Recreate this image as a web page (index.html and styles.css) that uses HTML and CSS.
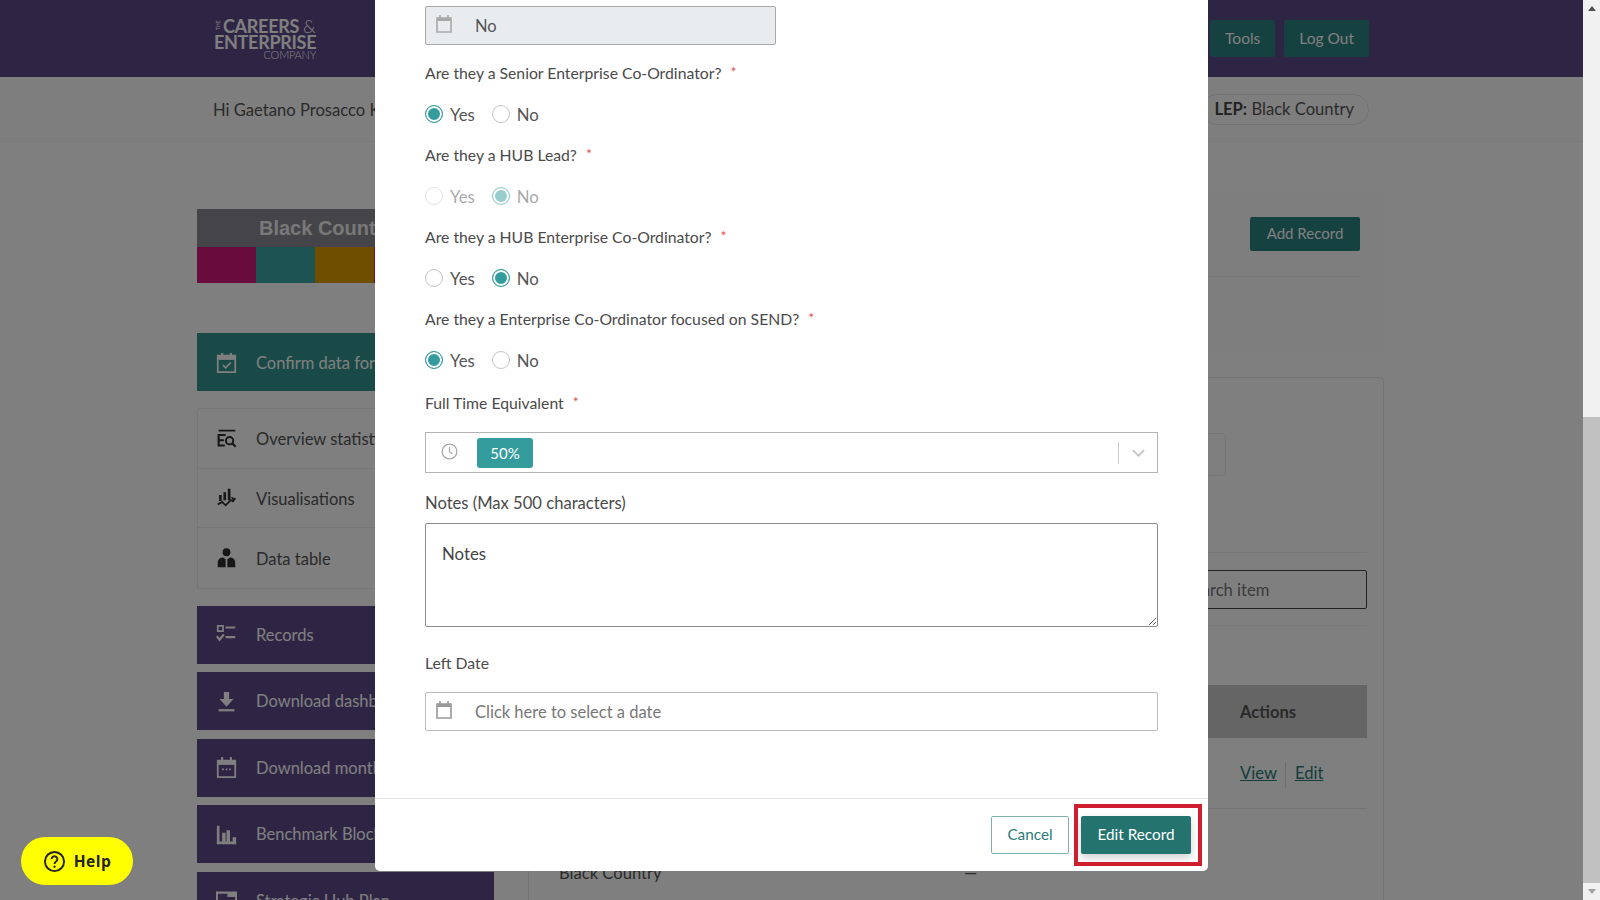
FILE: index.html
```html
<!DOCTYPE html>
<html lang="en">
<head>
    <meta charset="UTF-8">
    <meta name="viewport" content="width=device-width, initial-scale=1.0">
    <title>Edit Record</title>
    <link rel="stylesheet" href="styles.css">
</head>
<body>
<div class="app">
    <div class="page">
        <header class="topbar">
            <div class="logo">
                <div class="logo-line"><span class="logo-the">THE</span><b>CAREERS</b><span class="logo-amp">&amp;</span></div>
                <div class="logo-line"><b>ENTERPRISE</b></div>
                <div class="logo-company">COMPANY</div>
            </div>
            <nav class="topnav">
                <a class="topnav-btn">Tools</a>
                <a class="topnav-btn">Log Out</a>
            </nav>
        </header>

        <div class="subbar">
            <span>Hi Gaetano Prosacco Kuhn</span>
            <span class="lep-pill"><b>LEP:</b> Black Country</span>
        </div>

        <div class="content">
            <aside class="sidebar">
                <div class="banner">
                    <div class="banner-title">Black Country</div>
                    <div class="banner-colours">
                        <span class="c-pink"></span><span class="c-teal"></span><span class="c-gold"></span><span class="c-pink"></span><span class="c-teal"></span>
                    </div>
                </div>

                <a class="side-btn side-teal">
                    <svg class="side-icon" viewBox="0 0 24 24"><path d="M7 1v3M17 1v3" stroke="currentColor" stroke-width="2.4" fill="none"/><path d="M2 4h20v19H2z" stroke="currentColor" stroke-width="2" fill="none"/><path d="M2 4h20v5H2z" fill="currentColor"/><path d="M8 15l3 3 6-6" stroke="currentColor" stroke-width="2" fill="none"/></svg>
                    Confirm data for LEP
                </a>

                <div class="side-group">
                    <a class="side-row">
                        <svg class="side-icon" viewBox="0 0 24 24"><path d="M3 2h19v2H3z" fill="currentColor"/><path d="M11 8H3v12h7M3 14h6" stroke="currentColor" stroke-width="2.4" fill="none"/><circle cx="15.500" cy="14.500" r="4.200" stroke="currentColor" stroke-width="2.200" fill="none"/><path d="M18.500 17.500l4 4" stroke="currentColor" stroke-width="2.400"/></svg>
                        Overview statistics
                    </a>
                    <a class="side-row">
                        <svg class="side-icon" viewBox="0 0 24 24"><path d="M5 9v7M10 6v9M15 2v13" stroke="currentColor" stroke-width="3" fill="none"/><path d="M2 20l5-3 4 4 6-6 3 2" stroke="currentColor" stroke-width="2" fill="none"/><path d="M17 11l6 2-3 4z" fill="currentColor"/></svg>
                        Visualisations
                    </a>
                    <a class="side-row">
                        <svg class="side-icon" viewBox="0 0 24 24"><circle cx="12" cy="6" r="4.500" fill="currentColor"/><path d="M2 23v-5c0-4 3-6 6-6l3 2v9zM22 23v-5c0-4-3-6-6-6l-3 2v9z" fill="currentColor"/></svg>
                        Data table
                    </a>
                </div>

                <div class="side-stack">
                    <a class="side-btn side-purple">
                        <svg class="side-icon" viewBox="0 0 24 24"><path d="M2 2h6v6H2z" fill="none" stroke="currentColor" stroke-width="2"/><path d="M11 4h11M11 15h11" stroke="currentColor" stroke-width="2.400"/><path d="M1 14l3 4 5-6" fill="none" stroke="currentColor" stroke-width="2.400"/></svg>
                        Records
                    </a>
                    <a class="side-btn side-purple">
                        <svg class="side-icon" viewBox="0 0 24 24"><path d="M9 1h6v8h5l-8 9-8-9h5z" fill="currentColor"/><path d="M3 22h18" stroke="currentColor" stroke-width="2.600"/></svg>
                        Download dashboard
                    </a>
                    <a class="side-btn side-purple">
                        <svg class="side-icon" viewBox="0 0 24 24"><path d="M7 0v4M17 0v4" stroke="currentColor" stroke-width="2.400"/><path d="M2 4h20v19H2z" stroke="currentColor" stroke-width="2" fill="none"/><path d="M2 4h20v5H2z" fill="currentColor"/><path d="M7 13h2v2H7zM11 13h2v2h-2zM15 13h2v2h-2z" fill="currentColor"/></svg>
                        Download monthly report
                    </a>
                    <a class="side-btn side-purple">
                        <svg class="side-icon" viewBox="0 0 24 24"><path d="M1 2h3v21H1zM7 10h4v13H7zM12 7h4v16h-4zM19 15h4v8h-4z" fill="currentColor"/><path d="M1 21.500h22" stroke="currentColor" stroke-width="3"/></svg>
                        Benchmark Blocks
                    </a>
                    <a class="side-btn side-purple">
                        <svg class="side-icon" viewBox="0 0 24 24"><path d="M1 3h22v18H1z" fill="none" stroke="currentColor" stroke-width="2.400"/><path d="M13 3h10v5H13z" fill="currentColor"/></svg>
                        Strategic Hub Plan
                    </a>
                </div>
            </aside>

            <main class="main">
                <section class="card-top">
                    <div class="card-top-row"><a class="add-btn">Add Record</a></div>
                    <div class="card-top-line"></div>
                </section>

                <section class="card-list">
                    <div class="filter-row"><div class="filter-box"></div></div>
                    <div class="search-row"><div class="search-box">Search item</div></div>
                    <table class="records">
                        <thead>
                            <tr><th class="col-name">Name</th><th class="col-mid">Status</th><th class="col-actions">Actions</th></tr>
                        </thead>
                        <tbody>
                            <tr class="row-first">
                                <td class="col-name">Black Country</td><td class="col-mid">—</td>
                                <td class="col-actions"><a class="link">View</a><span class="link-sep"></span><a class="link">Edit</a></td>
                            </tr>
                            <tr class="row-second">
                                <td class="col-name">Black Country</td><td class="col-mid">—</td><td class="col-actions"></td>
                            </tr>
                        </tbody>
                    </table>
                </section>
            </main>
        </div>

        <div class="overlay"></div>

        <div class="modal">
            <div class="modal-body">
                <div class="input-box input-disabled">
                    <svg class="field-icon" viewBox="0 0 16 18"><path d="M4 0v3M12 0v3" stroke="currentColor" stroke-width="1.600"/><path d="M1 3h14v14H1z" fill="none" stroke="currentColor" stroke-width="1.600"/><path d="M1 3h14v3H1z" fill="currentColor"/></svg>
                    <span>No</span>
                </div>

                <p class="field-label first">Are they a Senior Enterprise Co-Ordinator? <span class="req">*</span></p>
                <div class="radios">
                    <label class="radio"><input type="radio" name="senior" checked>Yes</label>
                    <label class="radio"><input type="radio" name="senior">No</label>
                </div>

                <p class="field-label">Are they a HUB Lead? <span class="req">*</span></p>
                <div class="radios radios-off">
                    <label class="radio"><input type="radio" name="lead" disabled>Yes</label>
                    <label class="radio"><input type="radio" name="lead" disabled checked>No</label>
                </div>

                <p class="field-label">Are they a HUB Enterprise Co-Ordinator? <span class="req">*</span></p>
                <div class="radios">
                    <label class="radio"><input type="radio" name="hub">Yes</label>
                    <label class="radio"><input type="radio" name="hub" checked>No</label>
                </div>

                <p class="field-label">Are they a Enterprise Co-Ordinator focused on SEND? <span class="req">*</span></p>
                <div class="radios">
                    <label class="radio"><input type="radio" name="send" checked>Yes</label>
                    <label class="radio"><input type="radio" name="send">No</label>
                </div>

                <p class="field-label fte-label">Full Time Equivalent <span class="req">*</span></p>
                <div class="select-box">
                    <svg class="clock-icon" viewBox="0 0 18 18"><circle cx="9" cy="9" r="7.800" fill="none" stroke="currentColor" stroke-width="1.400"/><path d="M9 4.500V9.500l3 2" fill="none" stroke="currentColor" stroke-width="1.300"/></svg>
                    <span class="tag">50%</span>
                    <span class="select-sep"></span>
                    <svg class="chevron" viewBox="0 0 14 8"><path d="M1 1l6 6 6-6" fill="none" stroke="currentColor" stroke-width="2"/></svg>
                </div>

                <p class="field-label notes-label">Notes (Max 500 characters)</p>
                <textarea class="notes">Notes</textarea>

                <p class="field-label date-label">Left Date</p>
                <div class="input-box">
                    <svg class="field-icon" viewBox="0 0 16 18"><path d="M4 0v3M12 0v3" stroke="currentColor" stroke-width="1.600"/><path d="M1 3h14v14H1z" fill="none" stroke="currentColor" stroke-width="1.600"/><path d="M1 3h14v3H1z" fill="currentColor"/></svg>
                    <span class="placeholder">Click here to select a date</span>
                </div>
            </div>
            <div class="modal-footer">
                <button class="btn-cancel">Cancel</button>
                <button class="btn-edit">Edit Record</button>
            </div>
            <div class="highlight"></div>
        </div>

        <a class="help">
            <svg class="help-icon" viewBox="0 0 24 24"><circle cx="12" cy="12" r="10" fill="none" stroke="currentColor" stroke-width="2"/><path d="M9 9.500a3 3 0 1 1 4.600 2.500c-1 .7-1.600 1.200-1.600 2.500" fill="none" stroke="currentColor" stroke-width="2"/><circle cx="12" cy="17.500" r="1.200" fill="currentColor"/></svg>
            Help
        </a>
    </div>

    <div class="scrollbar">
        <span class="arrow-up"></span>
        <div class="scroll-track"><div class="scroll-thumb"></div></div>
        <span class="arrow-down"></span>
    </div>
</div>
</body>
</html>
```

FILE: styles.css
```css
* {
    box-sizing: border-box;
}
html, body {
    margin: 0;
    padding: 0;
    height: 100%;
    overflow: hidden;
}
body {
    font-family: Lato, "Open Sans", sans-serif;
    font-size: 16px;
    color: #555;
    background-color: #fff;
}
.app {
    display: flex;
    height: 900px;
}
.page {
    position: relative;
    flex: 1;
    height: 900px;
    overflow: hidden;
    background-color: #fff;
}

/* top bar */
.topbar {
    display: flex;
    justify-content: space-between;
    align-items: center;
    height: 77px;
    padding: 0 214px 0 214px;
    background-color: #5c4a8a;
}
.logo {
    width: 104px;
    color: #fff;
    line-height: 1;
}
.logo-line {
    display: flex;
    align-items: center;
    height: 16px;
    font-size: 18px;
    letter-spacing: -0.3px;
}
.logo-the {
    width: 9px;
    font-size: 5px;
    letter-spacing: 0;
    transform: rotate(-90deg);
}
.logo-amp {
    margin-left: 4px;
    font-weight: 300;
}
.logo-company {
    margin-top: -1px;
    padding-right: 2px;
    font-size: 11px;
    font-weight: 300;
    letter-spacing: -0.2px;
    text-align: right;
}
.topnav {
    display: flex;
    gap: 9px;
}
.topnav-btn {
    display: block;
    height: 37px;
    line-height: 36px;
    padding: 0 15px;
    font-size: 15.500px;
    color: #fff;
    border-radius: 3px;
    background-color: #2c8282;
}
.subbar {
    display: flex;
    justify-content: space-between;
    align-items: center;
    height: 65px;
    padding: 1px 214px 0 213px;
    font-size: 16.600px;
    border-bottom: 1px solid #f4f4f4;
    background-color: #fdfdfd;
}
.lep-pill {
    height: 31px;
    line-height: 29px;
    padding: 0 14px 0 12px;
    border: 1px solid #e6e6e6;
    border-radius: 16px;
}
.lep-pill b {
    color: #444;
}

/* sidebar */
.content {
    display: flex;
    padding: 50px 0 0 197px;
}
.sidebar {
    width: 297px;
    flex-shrink: 0;
    padding-top: 17px;
}
.banner {
    height: 74px;
    margin-bottom: 50px;
}
.banner-title {
    height: 38px;
    line-height: 38px;
    padding-left: 62px;
    font-family: "Liberation Sans", sans-serif;
    font-size: 20px;
    font-weight: bold;
    color: #f0f0f0;
    background-color: #8a8890;
}
.banner-colours {
    display: flex;
    height: 36px;
}
.banner-colours span {
    width: 59px;
}
.c-pink { background-color: #d0167a; }
.c-teal { background-color: #3aa8a6; }
.c-gold { background-color: #e09c00; }

.side-btn {
    display: flex;
    align-items: center;
    height: 58px;
    padding-left: 19px;
    font-size: 16.500px;
    color: #fff;
}
.side-teal {
    padding-top: 2px;
    background-color: #329490;
    margin-bottom: 17px;
}
.side-purple {
    background-color: #5c4a8a;
}
.side-icon {
    width: 21px;
    height: 21px;
    margin-right: 19px;
    flex-shrink: 0;
}
.side-teal .side-icon, .side-row .side-icon {
    margin-top: -2px;
}
.side-group {
    border: 1px solid #ececec;
    border-radius: 2px;
    margin-bottom: 17px;
}
.side-row {
    display: flex;
    align-items: center;
    height: 59.500px;
    padding: 2px 0 0 18px;
    font-size: 16.500px;
    color: #555;
    border-bottom: 1px solid #ececec;
}
.side-row:last-child {
    border-bottom: none;
}
.side-row .side-icon {
    color: #2c2c2c;
}
.side-stack {
    display: flex;
    flex-direction: column;
    gap: 8.500px;
}

/* main column behind the dialog */
.main {
    width: 856px;
    margin-left: 34px;
}
.card-top {
    height: 161px;
    padding: 25px 24px 0 24px;
    background-color: #fcfcfc;
}
.card-top-row {
    display: flex;
    justify-content: flex-end;
    height: 34px;
}
.add-btn {
    width: 110px;
    height: 34px;
    line-height: 33px;
    text-align: center;
    font-size: 15px;
    color: #fff;
    border-radius: 2px;
    background-color: #2c8282;
}
.card-top-line {
    margin-top: 25px;
    border-top: 1px solid #f0f0f0;
}
.card-list {
    margin-top: 24px;
    height: 600px;
    padding: 55px 16px 0 30px;
    border: 1px solid #e8e8e8;
    border-radius: 4px;
}
.filter-row {
    display: flex;
    justify-content: flex-end;
    height: 120px;
    padding-right: 141px;
    border-bottom: 1px solid #f0f0f0;
}
.filter-box {
    width: 200px;
    height: 43px;
    border: 1px solid #ececec;
    border-radius: 4px;
}
.search-row {
    display: flex;
    justify-content: flex-end;
    height: 73px;
    padding-top: 17px;
    border-bottom: 1px solid #f0f0f0;
}
.search-box {
    width: 300px;
    height: 39px;
    line-height: 39px;
    padding-left: 116px;
    font-size: 16.600px;
    color: #777;
    border: 1px solid #444;
    border-radius: 2px;
}
.records {
    width: 100%;
    margin-top: 59px;
    border-collapse: collapse;
    font-size: 16.600px;
}
.records th {
    height: 53px;
    text-align: left;
    font-weight: bold;
    background-color: #cacaca;
}
.records td {
    border-bottom: 1px solid #e8e8e8;
}
.col-name {
    width: 404px;
    padding-left: 0;
}
.col-mid {
    width: 276px;
}
.row-first td {
    height: 70px;
    padding-top: 6px;
}
.row-second td {
    height: 130px;
}
.link {
    color: #2c7c78;
    text-decoration: underline;
}
.link-sep {
    display: inline-block;
    width: 1px;
    height: 26px;
    margin: 0 8.500px;
    vertical-align: middle;
    background-color: #ddd;
}

.overlay {
    position: absolute;
    inset: 0;
    background-color: rgba(0, 0, 0, 0.5);
}

/* dialog */
.modal {
    position: absolute;
    top: 0;
    left: 375px;
    width: 833px;
    height: 871px;
    display: flex;
    flex-direction: column;
    background-color: #fff;
    border-radius: 0 0 5px 5px;
}
.modal-body {
    flex: 1;
    padding: 6px 50px 0 50px;
    border-bottom: 1px solid #e6e6e6;
}
.input-box {
    display: flex;
    align-items: center;
    height: 39px;
    padding-left: 10px;
    border: 1px solid #bbb;
    border-radius: 2px;
    color: #999;
}
.input-disabled {
    width: 351px;
    background-color: #e9ecef;
    color: #555;
    border-color: #a8a8a8;
}
.input-disabled .field-icon {
    color: #a8a8a8;
}
.field-icon {
    width: 16px;
    height: 18px;
    margin-right: 23px;
    margin-top: -4px;
    color: #999;
    flex-shrink: 0;
}
.input-box span {
    font-size: 16.500px;
}
.placeholder {
    color: #777;
}
.field-label {
    height: 24px;
    margin: 0 0 19px 0;
    line-height: 24px;
    font-size: 15.750px;
    color: #4a4a4a;
}
.field-label.first {
    margin-top: 15px;
}
.req {
    color: #d9534f;
    margin-left: 5px;
    font-size: 14px;
    vertical-align: 2px;
}
.radios {
    display: flex;
    gap: 17px;
    height: 22px;
    margin-bottom: 17px;
}
.radio {
    display: flex;
    align-items: center;
    gap: 7px;
    font-size: 16.800px;
    color: #555;
}
.radio input {
    appearance: none;
    width: 18px;
    height: 18px;
    margin: 0;
    border: 1px solid #c4c4c4;
    border-radius: 50%;
    background-color: #fff;
}
.radio input:checked {
    border-color: #349c9c;
    box-shadow: inset 0 0 0 2px #fff;
    background-color: #349c9c;
}
.radios-off {
    opacity: 0.5;
}
.fte-label {
    margin-top: 19px;
}
.select-box {
    display: flex;
    align-items: center;
    height: 41px;
    margin-top: -1px;
    padding: 0 12px 0 15px;
    border: 1px solid #b4b4b4;
}
.clock-icon {
    width: 17px;
    height: 17px;
    margin-right: 19px;
    margin-top: -3px;
    color: #aaa;
}
.tag {
    width: 56px;
    height: 30px;
    line-height: 30px;
    text-align: center;
    font-size: 15px;
    color: #fff;
    border-radius: 3px;
    background-color: #349c9c;
}
.select-sep {
    width: 1px;
    height: 22px;
    margin-left: auto;
    margin-right: 13px;
    background-color: #ccc;
}
.chevron {
    width: 13px;
    height: 8px;
    color: #c4c4c4;
}
.notes-label {
    margin: 18px 0 8px 0;
    font-size: 16.600px;
}
.notes {
    display: block;
    width: 100%;
    height: 104px;
    padding: 19px 16px;
    font-family: Lato, sans-serif;
    font-size: 16.800px;
    color: #444;
    border: 1px solid #8a8a8a;
    border-radius: 2px;
    outline: none;
}
.date-label {
    margin: 24px 0 17px 0;
}
.modal-footer {
    display: flex;
    justify-content: flex-end;
    gap: 12px;
    height: 72px;
    padding: 17px 17px 0 0;
}
.btn-cancel, .btn-edit {
    height: 38px;
    padding-bottom: 3px;
    font-family: Lato, sans-serif;
    font-size: 15.300px;
    border-radius: 2px;
}
.btn-cancel {
    width: 78px;
    color: #2c7c78;
    background-color: #fff;
    border: 1px solid #7fb0ae;
}
.btn-edit {
    width: 110px;
    color: #fff;
    border: none;
    background-color: #24736f;
    box-shadow: 0 4px 8px rgba(0, 0, 0, 0.18);
}
.highlight {
    position: absolute;
    left: 699px;
    top: 804px;
    width: 128px;
    height: 62px;
    border: 4px solid #cf1f2e;
}

.help {
    position: absolute;
    left: 21px;
    top: 837px;
    width: 112px;
    height: 48px;
    display: flex;
    align-items: center;
    justify-content: center;
    gap: 8px;
    font-family: "Open Sans", sans-serif;
    font-size: 15.500px;
    font-weight: bold;
    letter-spacing: 0.5px;
    color: #222;
    border-radius: 24px;
    background-color: #ffff00;
}
.help-icon {
    width: 23px;
    height: 23px;
}

/* scrollbar */
.scrollbar {
    display: flex;
    flex-direction: column;
    align-items: center;
    width: 17px;
    height: 900px;
    background-color: #f1f1f1;
}
.arrow-up, .arrow-down {
    width: 0;
    height: 0;
    margin: 6px 0;
    border-left: 4px solid transparent;
    border-right: 4px solid transparent;
}
.arrow-up {
    border-bottom: 5px solid #505050;
}
.arrow-down {
    border-top: 5px solid #a3a3a3;
}
.scroll-track {
    flex: 1;
    width: 100%;
    display: flex;
    align-items: flex-end;
}
.scroll-thumb {
    width: 100%;
    height: 466px;
    background-color: #c1c1c1;
}
```
